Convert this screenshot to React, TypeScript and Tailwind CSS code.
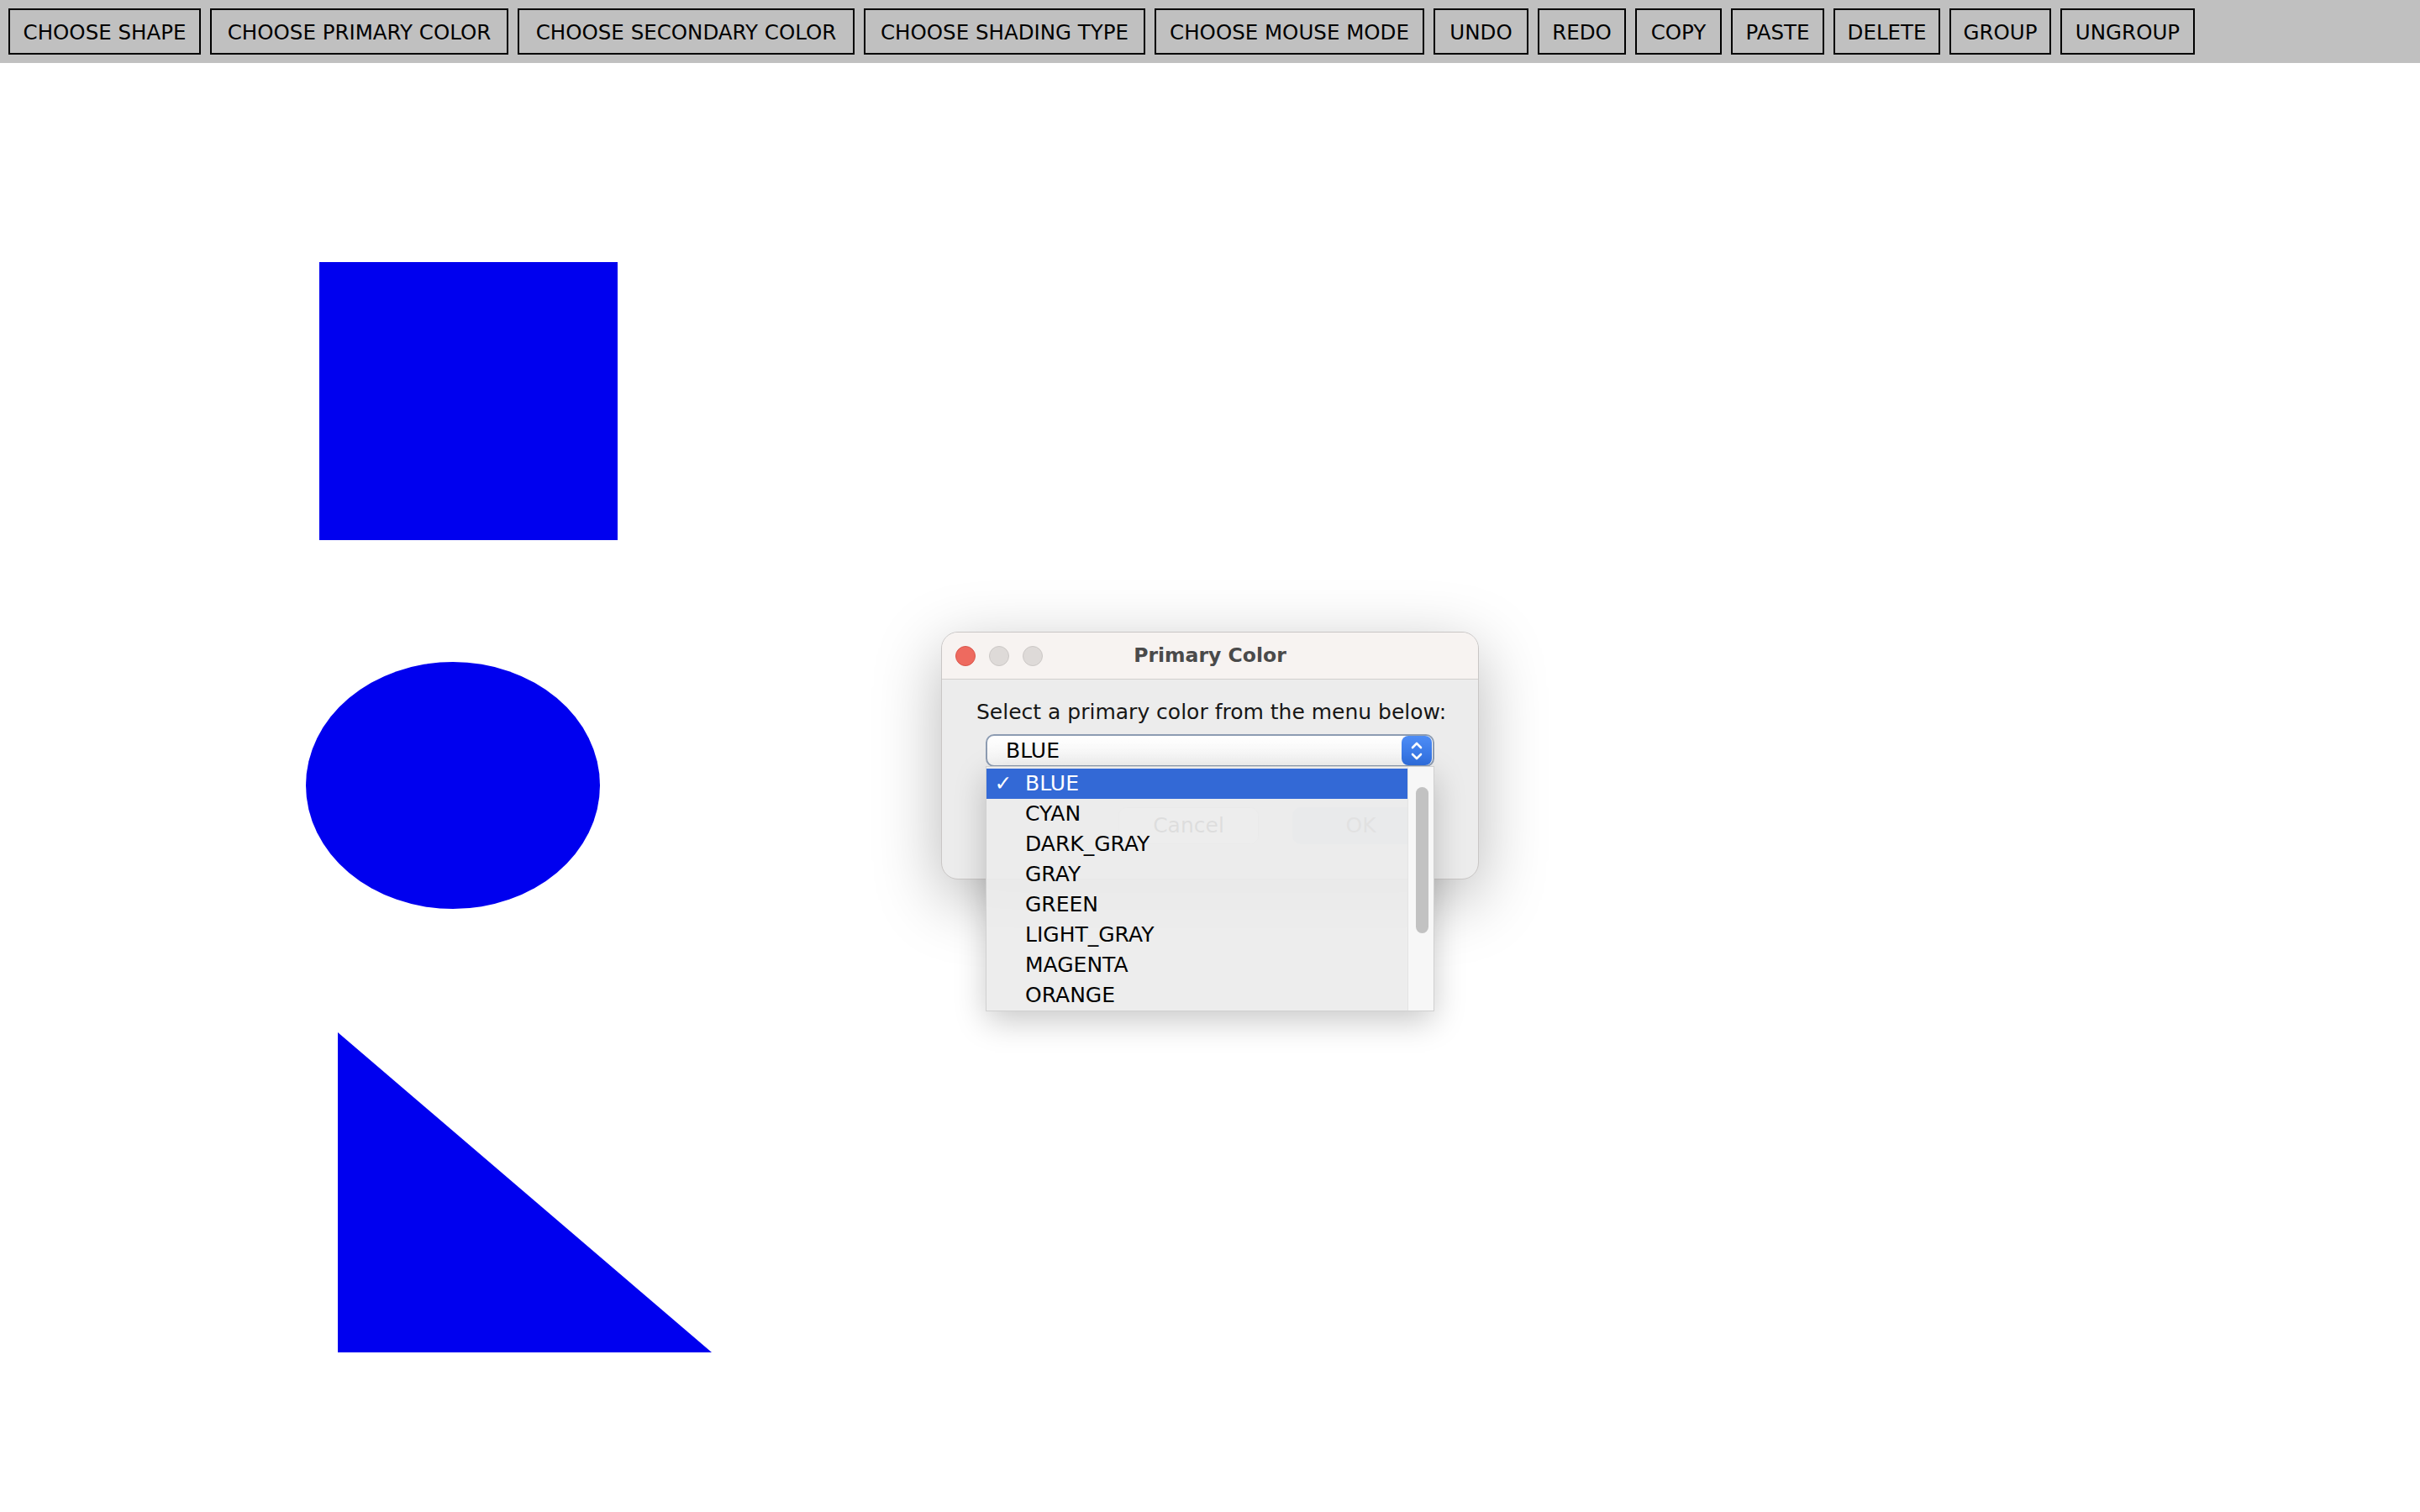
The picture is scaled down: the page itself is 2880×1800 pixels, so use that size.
const tools = [
  { label: 'CHOOSE SHAPE', w: 'w-[229px]' },
  { label: 'CHOOSE PRIMARY COLOR', w: 'w-[355px]' },
  { label: 'CHOOSE SECONDARY COLOR', w: 'w-[401px]' },
  { label: 'CHOOSE SHADING TYPE', w: 'w-[335px]' },
  { label: 'CHOOSE MOUSE MODE', w: 'w-[321px]' },
  { label: 'UNDO', w: 'w-[113px]' },
  { label: 'REDO', w: 'w-[105px]' },
  { label: 'COPY', w: 'w-[103px]' },
  { label: 'PASTE', w: 'w-[111px]' },
  { label: 'DELETE', w: 'w-[127px]' },
  { label: 'GROUP', w: 'w-[121px]' },
  { label: 'UNGROUP', w: 'w-[160px]' },
];

const colors = ['BLUE', 'CYAN', 'DARK_GRAY', 'GRAY', 'GREEN', 'LIGHT_GRAY', 'MAGENTA', 'ORANGE'];

function Toolbar() {
  return (
    <div className="flex h-[75px] items-start gap-[11px] bg-[#c0c0c0] pl-[10px] pt-[10px]">
      {tools.map((t) => (
        <button
          key={t.label}
          className={`${t.w} flex h-[55px] items-center justify-center border-2 border-black bg-[#c0c0c0] pt-[3px] text-[24.5px] leading-none text-black`}
        >
          {t.label}
        </button>
      ))}
    </div>
  );
}

function Canvas() {
  return (
    <svg width="2880" height="1725" viewBox="0 75 2880 1725" className="block">
      <rect x="380" y="312" width="355" height="331" fill="#0000ef" />
      <ellipse cx="539" cy="935" rx="175" ry="147" fill="#0000ef" />
      <polygon points="402,1229 402,1610 847,1610" fill="#0000ef" />
    </svg>
  );
}

function ComboArrow() {
  return (
    <div className="flex h-[35px] w-[36px] items-center justify-center rounded-[8px] bg-gradient-to-b from-[#4d8cf5] to-[#2f6fe0]">
      <svg width="16" height="24" viewBox="0 0 16 24" fill="none" stroke="white" strokeWidth="2.6" strokeLinecap="round" strokeLinejoin="round">
        <path d="M3 8 L8 3 L13 8" />
        <path d="M3 16 L8 21 L13 16" />
      </svg>
    </div>
  );
}

function ColorDialog() {
  return (
    <div className="absolute left-[1120px] top-[752px] w-[640px]">
      <div className="h-[295px] overflow-hidden rounded-[20px] border border-[#c9c6c5] bg-[#ececec] shadow-[0_22px_80px_rgba(0,0,0,0.28)]">
        <div className="relative flex h-[56px] items-center border-b border-[#d2cfce] bg-[#f7f3f1]">
          <div className="flex items-center gap-[16px] pl-[16px]">
            <span className="h-[24px] w-[24px] rounded-full border border-[#d9574c] bg-[#ee6a5f]" />
            <span className="h-[24px] w-[24px] rounded-full border border-[#cbc7c5] bg-[#dedad8]" />
            <span className="h-[24px] w-[24px] rounded-full border border-[#cbc7c5] bg-[#dedad8]" />
          </div>
          <div className="absolute inset-0 flex items-center justify-center text-[23.5px] font-bold text-[#4a4a4a]">
            Primary Color
          </div>
        </div>
        <div className="pl-[41px] pt-[24px]">
          <div className="h-[30px] text-[25px] leading-[30px] text-[#161616]">Select a primary color from the menu below:</div>
          <div className="ml-[11px] mt-[11px] flex h-[39px] w-[534px] items-center justify-between rounded-[10px] border-2 border-[#8d9cb2] bg-gradient-to-b from-white to-[#f4f4f4] pl-[22px] pr-[1px]">
            <span className="text-[25px] text-black">BLUE</span>
            <ComboArrow />
          </div>
          <div className="ml-[169px] mt-[48px] flex gap-[40px]">
            <div className="flex h-[44px] w-[167px] items-center justify-center rounded-[10px] border border-[#d6d6d6] bg-white text-[25px] text-[#222]">
              Cancel
            </div>
            <div className="flex h-[44px] w-[163px] items-center justify-center rounded-[10px] bg-[#c2cde3] text-[25px] text-[#555]">
              OK
            </div>
          </div>
        </div>
      </div>

      <div className="absolute left-[54px] top-[161px] flex h-[290px] w-[532px] bg-[rgba(236,236,236,0.93)] shadow-[0_12px_36px_rgba(0,0,0,0.22)] ring-1 ring-[#d0d0d0]">
        <div className="flex-1 pt-[2px]">
          {colors.map((c, i) => (
            <div
              key={c}
              className={`flex h-[36px] items-center text-[25px] ${i === 0 ? 'bg-[#3369d6] text-white' : 'text-black'}`}
            >
              <span className="w-[40px] text-center">{i === 0 ? '✓' : ''}</span>
              <span className="ml-[6px]">{c}</span>
            </div>
          ))}
        </div>
        <div className="w-[31px] border-l border-[#e4e4e4] bg-[rgba(248,248,248,0.95)] pl-[9px] pt-[24px]">
          <div className="h-[174px] w-[15px] rounded-full bg-[#c2c2c2]" />
        </div>
      </div>
    </div>
  );
}

export default function App() {
  return (
    <div className="relative min-h-screen w-full overflow-hidden bg-white font-['DejaVu_Sans',sans-serif]">
      <Toolbar />
      <Canvas />
      <ColorDialog />
    </div>
  );
}
